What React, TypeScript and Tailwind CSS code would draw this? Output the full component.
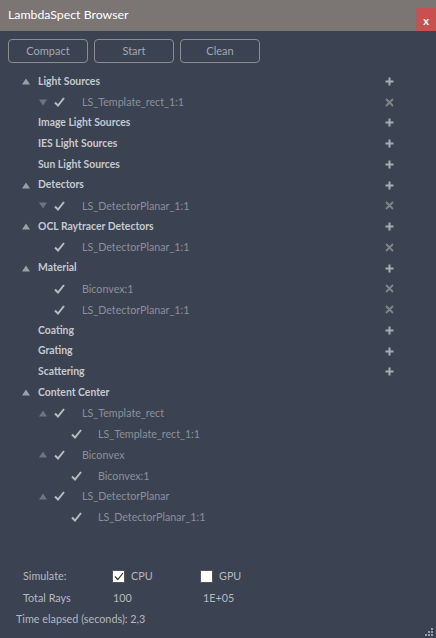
import React from "react";

type Node = {
  label: string;
  level: 0 | 1 | 2;
  tri?: "up" | "down";
  check?: boolean;
  action?: "plus" | "x";
};

const TREE: Node[] = [
  { label: "Light Sources", level: 0, tri: "up", action: "plus" },
  { label: "LS_Template_rect_1:1", level: 1, tri: "down", check: true, action: "x" },
  { label: "Image Light Sources", level: 0, action: "plus" },
  { label: "IES Light Sources", level: 0, action: "plus" },
  { label: "Sun Light Sources", level: 0, action: "plus" },
  { label: "Detectors", level: 0, tri: "up", action: "plus" },
  { label: "LS_DetectorPlanar_1:1", level: 1, tri: "down", check: true, action: "x" },
  { label: "OCL Raytracer Detectors", level: 0, tri: "up", action: "plus" },
  { label: "LS_DetectorPlanar_1:1", level: 1, check: true, action: "x" },
  { label: "Material", level: 0, tri: "up", action: "plus" },
  { label: "Biconvex:1", level: 1, check: true, action: "x" },
  { label: "LS_DetectorPlanar_1:1", level: 1, check: true, action: "x" },
  { label: "Coating", level: 0, action: "plus" },
  { label: "Grating", level: 0, action: "plus" },
  { label: "Scattering", level: 0, action: "plus" },
  { label: "Content Center", level: 0, tri: "up" },
  { label: "LS_Template_rect", level: 1, tri: "up", check: true },
  { label: "LS_Template_rect_1:1", level: 2, check: true },
  { label: "Biconvex", level: 1, tri: "up", check: true },
  { label: "Biconvex:1", level: 2, check: true },
  { label: "LS_DetectorPlanar", level: 1, tri: "up", check: true },
  { label: "LS_DetectorPlanar_1:1", level: 2, check: true },
];

function Tri({ dir, dim }: { dir: "up" | "down"; dim?: boolean }) {
  return (
    <svg width="8" height="7" viewBox="0 0 8 7" className={dim ? "text-[#6f7580]" : "text-[#9aa0a8]"}>
      {dir === "up" ? (
        <path d="M4 0.5 L8 6.5 L0 6.5 Z" fill="currentColor" />
      ) : (
        <path d="M0 0.5 L8 0.5 L4 6.5 Z" fill="currentColor" />
      )}
    </svg>
  );
}

function Check() {
  return (
    <svg width="11" height="10" viewBox="0 0 11 10">
      <path d="M1 5.5 L4 8.5 L10 1" fill="none" stroke="#b8bcc2" strokeWidth="2" />
    </svg>
  );
}

function Plus() {
  return (
    <svg width="9" height="9" viewBox="0 0 9 9">
      <path d="M4.5 0.5 V8.5 M0.5 4.5 H8.5" stroke="#a9adb3" strokeWidth="2" />
    </svg>
  );
}

function Cross() {
  return (
    <svg width="9" height="9" viewBox="0 0 9 9">
      <path d="M1 1 L8 8 M8 1 L1 8" stroke="#80858c" strokeWidth="1.8" />
    </svg>
  );
}

function Row({ n }: { n: Node }) {
  const isCat = n.level === 0;
  return (
    <div className="relative flex h-[20.75px] items-center">
      {isCat ? (
        <>
          <div className="flex w-[38px] justify-end pr-[8px]">{n.tri && <Tri dir={n.tri} />}</div>
          <span className="text-[10.4px] font-bold text-[#c5c9cf]">{n.label}</span>
        </>
      ) : n.level === 1 ? (
        <>
          <div className="flex w-[54px] justify-end pr-[7px]">{n.tri && <Tri dir={n.tri} dim />}</div>
          <div className="w-[28px]">{n.check && <Check />}</div>
          <span className="text-[10.7px] text-[#8b9099]">{n.label}</span>
        </>
      ) : (
        <>
          <div className="w-[71px]" />
          <div className="w-[27px]">{n.check && <Check />}</div>
          <span className="text-[10.7px] text-[#8b9099]">{n.label}</span>
        </>
      )}
      {n.action && (
        <div className="absolute left-[385px] top-0 flex h-full items-center">
          {n.action === "plus" ? <Plus /> : <Cross />}
        </div>
      )}
    </div>
  );
}

export default function App() {
  return (
    <div
      className="relative flex h-[638px] w-[436px] flex-col bg-[#3b4352] text-[#c5c9cf]"
      style={{ fontFamily: 'Lato, "Open Sans", sans-serif' }}
    >
      {/* title bar */}
      <div className="relative flex h-[31px] items-center bg-[#7b7574] pl-[8px]">
        <span className="text-[12.3px] text-white">LambdaSpect Browser</span>
        <div className="absolute right-0 top-[8px] flex h-[23px] w-[20px] items-center justify-center bg-[#c8504f] pt-[2px] text-[11px] font-bold leading-none text-white">
          x
        </div>
      </div>

      {/* buttons */}
      <div className="flex gap-[6px] pl-[8px] pt-[8px]">
        {["Compact", "Start", "Clean"].map((b) => (
          <button
            key={b}
            className="flex h-[24px] w-[80px] items-center justify-center rounded-[4px] border border-[#8a8c90] text-[11px] text-[#a3a8b0]"
          >
            {b}
          </button>
        ))}
      </div>

      {/* tree */}
      <div className="mt-[8px] flex flex-col">
        {TREE.map((n, i) => (
          <Row key={i} n={n} />
        ))}
      </div>

      {/* footer */}
      <div className="mt-auto flex flex-col pb-[9px] text-[10.8px] text-[#b5b9bf]">
        <div className="flex h-[21px] items-center">
          <span className="w-[112px] pl-[23px]">Simulate:</span>
          <span className="flex h-[13px] w-[13px] items-center justify-center border border-[#555] bg-white">
            <svg width="10" height="9" viewBox="0 0 10 9">
              <path d="M1 4.5 L3.8 7.5 L9 1" fill="none" stroke="#333" strokeWidth="1.2" />
            </svg>
          </span>
          <span className="ml-[6px] w-[69px]">CPU</span>
          <span className="h-[13px] w-[13px] border border-[#555] bg-white" />
          <span className="ml-[6px]">GPU</span>
        </div>
        <div className="flex h-[22px] items-center pt-[1px]">
          <span className="w-[113px] pl-[23px]">Total Rays</span>
          <span className="w-[90px]">100</span>
          <span>1E+05</span>
        </div>
        <div className="flex h-[20px] items-center pl-[16px]">Time elapsed (seconds): 2,3</div>
      </div>

      {/* resize grip */}
      <svg width="8" height="8" viewBox="0 0 8 8" className="absolute bottom-[2px] right-[3px]">
        <rect x="6" y="0" width="2" height="2" fill="#9aa0a8" />
        <rect x="3" y="3" width="2" height="2" fill="#9aa0a8" />
        <rect x="6" y="3" width="2" height="2" fill="#9aa0a8" />
        <rect x="0" y="6" width="2" height="2" fill="#9aa0a8" />
        <rect x="3" y="6" width="2" height="2" fill="#9aa0a8" />
        <rect x="6" y="6" width="2" height="2" fill="#9aa0a8" />
      </svg>
    </div>
  );
}
